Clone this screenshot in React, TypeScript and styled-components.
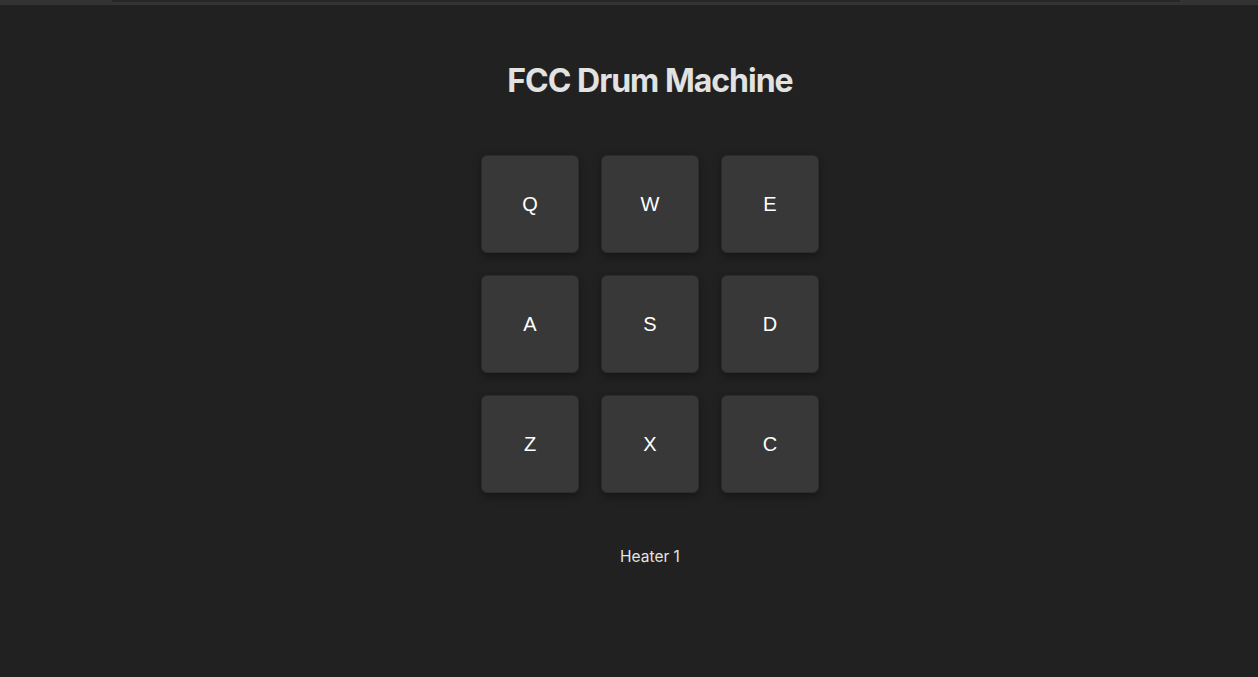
import React from "react";
import styled, { createGlobalStyle } from "styled-components";

const GlobalStyle = createGlobalStyle`
  html, body {
    margin: 0;
    padding: 0;
    background-color: #212121;
  }
  body {
    font-family: Inter, "Noto Sans", sans-serif;
    overflow: hidden;
  }
`;

const TopBar = styled.div`
  height: 5px;
  background-color: #333333;
  display: flex;
  padding: 0 78px 0 112px;
`;

const TopThumb = styled.div`
  flex: 1;
  height: 2px;
  background-color: #272727;
`;

const Main = styled.div`
  display: flex;
  flex-direction: column;
  align-items: center;
  padding-left: 42px;
`;

const Title = styled.h1`
  margin: 56px 0 0 0;
  font-size: 32px;
  font-weight: 700;
  line-height: 39px;
  color: #e2e2e2;
  letter-spacing: -1px;
`;

const PadGrid = styled.div`
  display: grid;
  grid-template-columns: repeat(3, 98px);
  grid-auto-rows: 98px;
  gap: 22px;
  margin-top: 55px;
`;

const Pad = styled.button`
  background-color: #383838;
  border: 1px solid #2c2c2c;
  border-radius: 6px;
  box-shadow: 0 3px 8px rgba(0, 0, 0, 0.35);
  color: #ffffff;
  font-family: "Liberation Sans", Arial, sans-serif;
  font-size: 20px;
  display: flex;
  align-items: center;
  justify-content: center;
  padding: 0;
  cursor: pointer;
`;

const Display = styled.div`
  margin-top: 54px;
  font-size: 15.5px;
  line-height: 19px;
  color: #e4e4e4;
`;

const keys = ["Q", "W", "E", "A", "S", "D", "Z", "X", "C"];

function App() {
  return (
    <>
      <GlobalStyle />
      <TopBar>
        <TopThumb />
      </TopBar>
      <Main>
        <Title>FCC Drum Machine</Title>
        <PadGrid>
          {keys.map((k) => (
            <Pad key={k}>{k}</Pad>
          ))}
        </PadGrid>
        <Display>Heater 1</Display>
      </Main>
    </>
  );
}

export default App;
